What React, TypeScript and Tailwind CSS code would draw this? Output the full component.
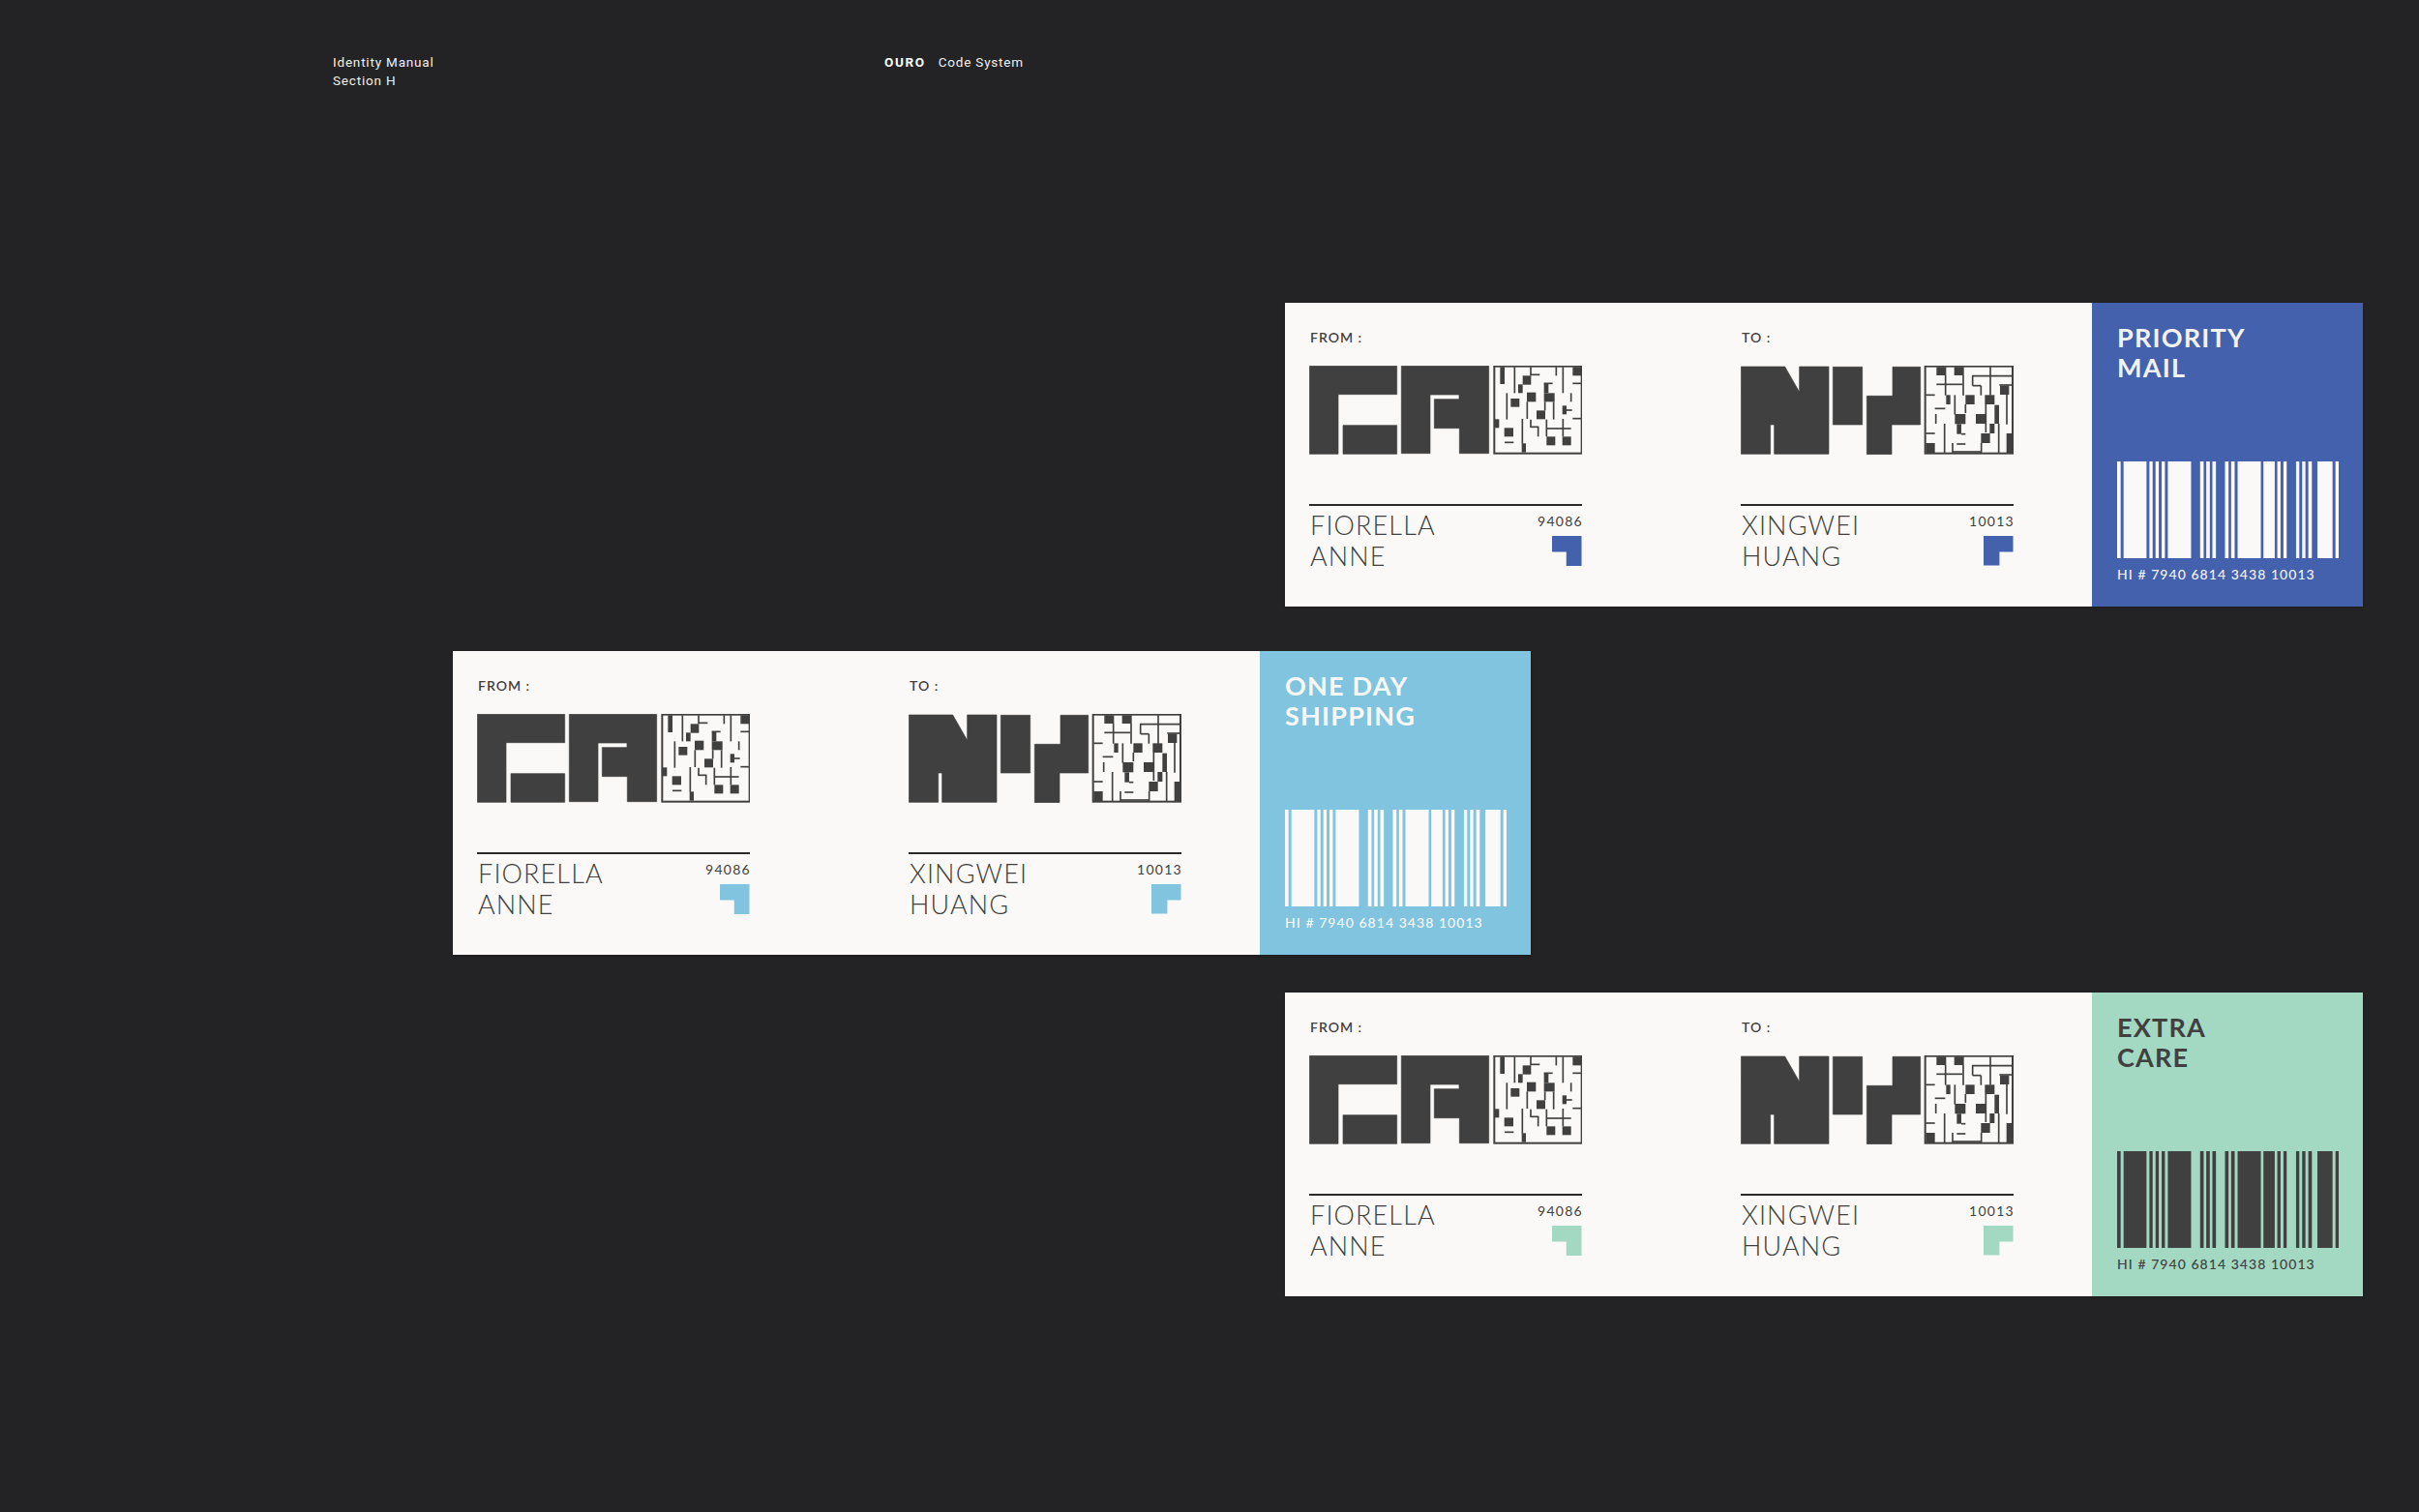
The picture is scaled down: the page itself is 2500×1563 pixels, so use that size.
const INK = '#404040';

type Box = [number, number, number, number];

// coordinates are in a 3x grid of the final pixels, [x1, y1, x2, y2]
const fromBlocks: Box[] = [
  [692, 207, 706, 260], [762, 234, 788, 262], [748, 261, 762, 288], [917, 207, 943, 234],
  [828, 258, 842, 288], [828, 288, 861, 315], [725, 305, 752, 331], [775, 286, 803, 315],
  [805, 342, 832, 369], [885, 327, 898, 354], [676, 369, 689, 396], [705, 396, 733, 423],
  [759, 444, 772, 472], [836, 423, 863, 450], [885, 423, 912, 450],
];
const fromLines: Box[] = [
  [737, 207, 737, 288], [787, 207, 787, 234], [787, 231, 815, 231], [866, 207, 866, 234],
  [887, 207, 887, 288], [917, 258, 943, 258], [713, 288, 713, 370], [776, 315, 776, 368],
  [828, 258, 855, 258], [858, 315, 858, 370], [831, 315, 831, 342], [912, 288, 912, 315],
  [898, 341, 915, 341], [917, 367, 943, 367], [706, 441, 734, 441], [761, 368, 761, 445],
  [787, 370, 787, 395], [787, 393, 812, 393], [810, 393, 810, 423], [836, 370, 836, 423],
  [836, 398, 912, 398], [887, 368, 887, 423],
];
const toBlocks: Box[] = [
  [665, 207, 695, 233], [720, 207, 750, 233], [862, 265, 890, 293], [695, 294, 708, 323],
  [755, 294, 783, 323], [815, 294, 845, 323], [722, 353, 755, 384], [728, 384, 742, 415],
  [787, 353, 817, 383], [845, 325, 859, 383], [830, 383, 845, 413], [803, 413, 831, 443],
  [632, 443, 660, 473], [882, 413, 900, 473],
];
const toLines: Box[] = [
  [693, 233, 693, 295], [748, 233, 748, 295], [665, 261, 745, 261], [775, 235, 900, 235],
  [832, 207, 832, 295], [777, 235, 777, 265], [777, 265, 803, 265], [803, 265, 803, 295],
  [860, 263, 900, 263], [883, 293, 883, 385], [632, 294, 660, 294], [722, 294, 722, 355],
  [755, 323, 755, 350], [660, 336, 692, 336], [663, 353, 663, 383], [818, 323, 818, 410],
  [632, 413, 660, 413], [690, 383, 690, 473], [715, 443, 715, 473], [715, 470, 805, 470],
  [728, 446, 755, 446], [742, 415, 755, 415], [804, 443, 804, 473], [858, 383, 858, 473],
];

const bars: [number, number][] = [
  [113, 124], [133, 204], [213, 223], [232, 242], [251, 261], [270, 342], [370, 381],
  [389, 400], [408, 419], [447, 458], [466, 477], [486, 558], [566, 601], [609, 619],
  [628, 638], [667, 677], [686, 696], [705, 716], [733, 780], [789, 799],
];

function Maze({ x, blocks, lines }: { x: number; blocks: Box[]; lines: Box[] }) {
  return (
    <>
      <rect x={x} y={205} width={271} height={270} fill="none" stroke={INK} strokeWidth={6} />
      {blocks.map((b, i) => (
        <rect key={i} x={b[0]} y={b[1]} width={b[2] - b[0]} height={b[3] - b[1]} fill={INK} />
      ))}
      {lines.map((l, i) => (
        <line key={i} x1={l[0]} y1={l[1]} x2={l[2]} y2={l[3]} stroke={INK} strokeWidth={5} />
      ))}
    </>
  );
}

function FromMark() {
  return (
    <svg viewBox="100 203 846 276" className="w-[282px] h-[92px] block">
      <g fill={INK} stroke={INK} strokeWidth={2} strokeLinejoin="round">
        <path d="M101 204H372V292H190V477H101Z" />
        <path d="M205 388H372V477H205Z" />
        <path d="M386 204H657V475H566V397H488V307H565V293H475V475H386Z" />
      </g>
      <Maze x={674} blocks={fromBlocks} lines={fromLines} />
    </svg>
  );
}

function ToMark() {
  return (
    <svg viewBox="58 203 846 276" className="w-[282px] h-[92px] block">
      <g fill={INK} stroke={INK} strokeWidth={2} strokeLinejoin="round">
        <path d="M59 206H195L240 285V206H331V477H162V386H150V477H59Z" />
        <path d="M344 207H435V386H344Z" />
        <path d="M529 207H615V386H526V478H449V297H529Z" />
      </g>
      <Maze x={630} blocks={toBlocks} lines={toLines} />
    </svg>
  );
}

function AddressColumn(props: { label: string; mark: React.ReactNode; first: string; second: string; zip: string; tag: React.ReactNode }) {
  return (
    <div className="w-[282px]">
      <div className="h-5 pl-px text-[14px] leading-5 font-semibold tracking-[0.07em] text-[#404040]">{props.label}</div>
      <div className="mt-[19px]">{props.mark}</div>
      <div className="mt-[51px] border-t-2 border-[#2a2a2a] pt-[4px] flex justify-between">
        <div className="pl-px text-[27px] leading-[31.5px] font-light tracking-[0.042em] text-[#404040]">
          <div>{props.first}</div>
          <div>{props.second}</div>
        </div>
        <div className="flex flex-col items-end">
          <div className="-mr-px text-[14px] leading-[20px] mt-[2px] tracking-[0.09em] text-[#404040]">{props.zip}</div>
          <div className="mt-[5px]">{props.tag}</div>
        </div>
      </div>
    </div>
  );
}

function Label(props: { title: [string, string]; accent: string; panelClass: string; barColor: string; textClass: string; cardClass: string; }) {
  const { accent } = props;
  return (
    <div className={`flex w-[1113.5px] h-[313.5px] bg-[#faf9f7] shadow-sm ${props.cardClass}`}>
      <div className="flex-1 pl-[25px] pt-[26px] flex gap-[164px]">
        <AddressColumn
          label="FROM :"
          mark={<FromMark />}
          first="FIORELLA"
          second="ANNE"
          zip="94086"
          tag={
            <svg viewBox="0 0 91 92" className="w-[30.5px] h-[31px] block mr-[0.5px]">
              <path d="M2 0H91V92H44V49H2Q0 49 0 47V2Q0 0 2 0Z" fill={accent} />
            </svg>
          }
        />
        <AddressColumn
          label="TO :"
          mark={<ToMark />}
          first="XINGWEI"
          second="HUANG"
          zip="10013"
          tag={
            <svg viewBox="0 0 91 91" className="w-[30.5px] h-[30.5px] block mr-[0.5px]">
              <path d="M0 0H91V49H49V91H0Z" fill={accent} />
            </svg>
          }
        />
      </div>
      <div className={`w-[279.5px] shrink-0 pl-[26px] pt-[20px] ${props.panelClass} ${props.textClass}`}>
        <div className="h-[143.5px] text-[27px] leading-[31px] font-bold tracking-[0.045em]">
          <div>{props.title[0]}</div>
          <div>{props.title[1]}</div>
        </div>
        <svg viewBox="113 0 686 100" preserveAspectRatio="none" className="w-[229px] h-[100px] block">
          {bars.map((b, i) => (
            <rect key={i} x={b[0]} y={0} width={b[1] - b[0]} height={100} fill={props.barColor} />
          ))}
        </svg>
        <div className="mt-[7px] text-[14px] leading-5 font-medium tracking-[0.075em] whitespace-nowrap">HI # 7940 6814 3438 10013</div>
      </div>
    </div>
  );
}

export default function App() {
  return (
    <div className="w-[2500px] h-[1563px] overflow-hidden bg-[#232325] font-['Lato',sans-serif]">
      <div className="flex pl-[344px] pt-[55px] h-[313px] text-[13.5px] leading-[18.5px] text-[#f0f0f0] font-['Roboto',sans-serif] tracking-[0.06em]">
        <div className="w-[570px]">
          <div>Identity Manual</div>
          <div>Section H</div>
        </div>
        <div className="flex gap-[13px]">
          <span className="font-bold text-white tracking-[0.12em]">OURO</span>
          <span>Code System</span>
        </div>
      </div>

      <Label
        cardClass="ml-[1328px]"
        title={['PRIORITY', 'MAIL']}
        accent="#4361ad"
        panelClass="bg-[#4361ad]"
        barColor="#faf9f7"
        textClass="text-[#f4f3f4]"
      />
      <Label
        cardClass="ml-[468px] mt-[46.5px]"
        title={['ONE DAY', 'SHIPPING']}
        accent="#80c4e0"
        panelClass="bg-[#80c4e0]"
        barColor="#faf9f7"
        textClass="text-[#f8f8f6]"
      />
      <Label
        cardClass="ml-[1328px] mt-[39.5px]"
        title={['EXTRA', 'CARE']}
        accent="#a3d8c2"
        panelClass="bg-[#a3d8c2]"
        barColor="#404040"
        textClass="text-[#404040]"
      />
    </div>
  );
}
